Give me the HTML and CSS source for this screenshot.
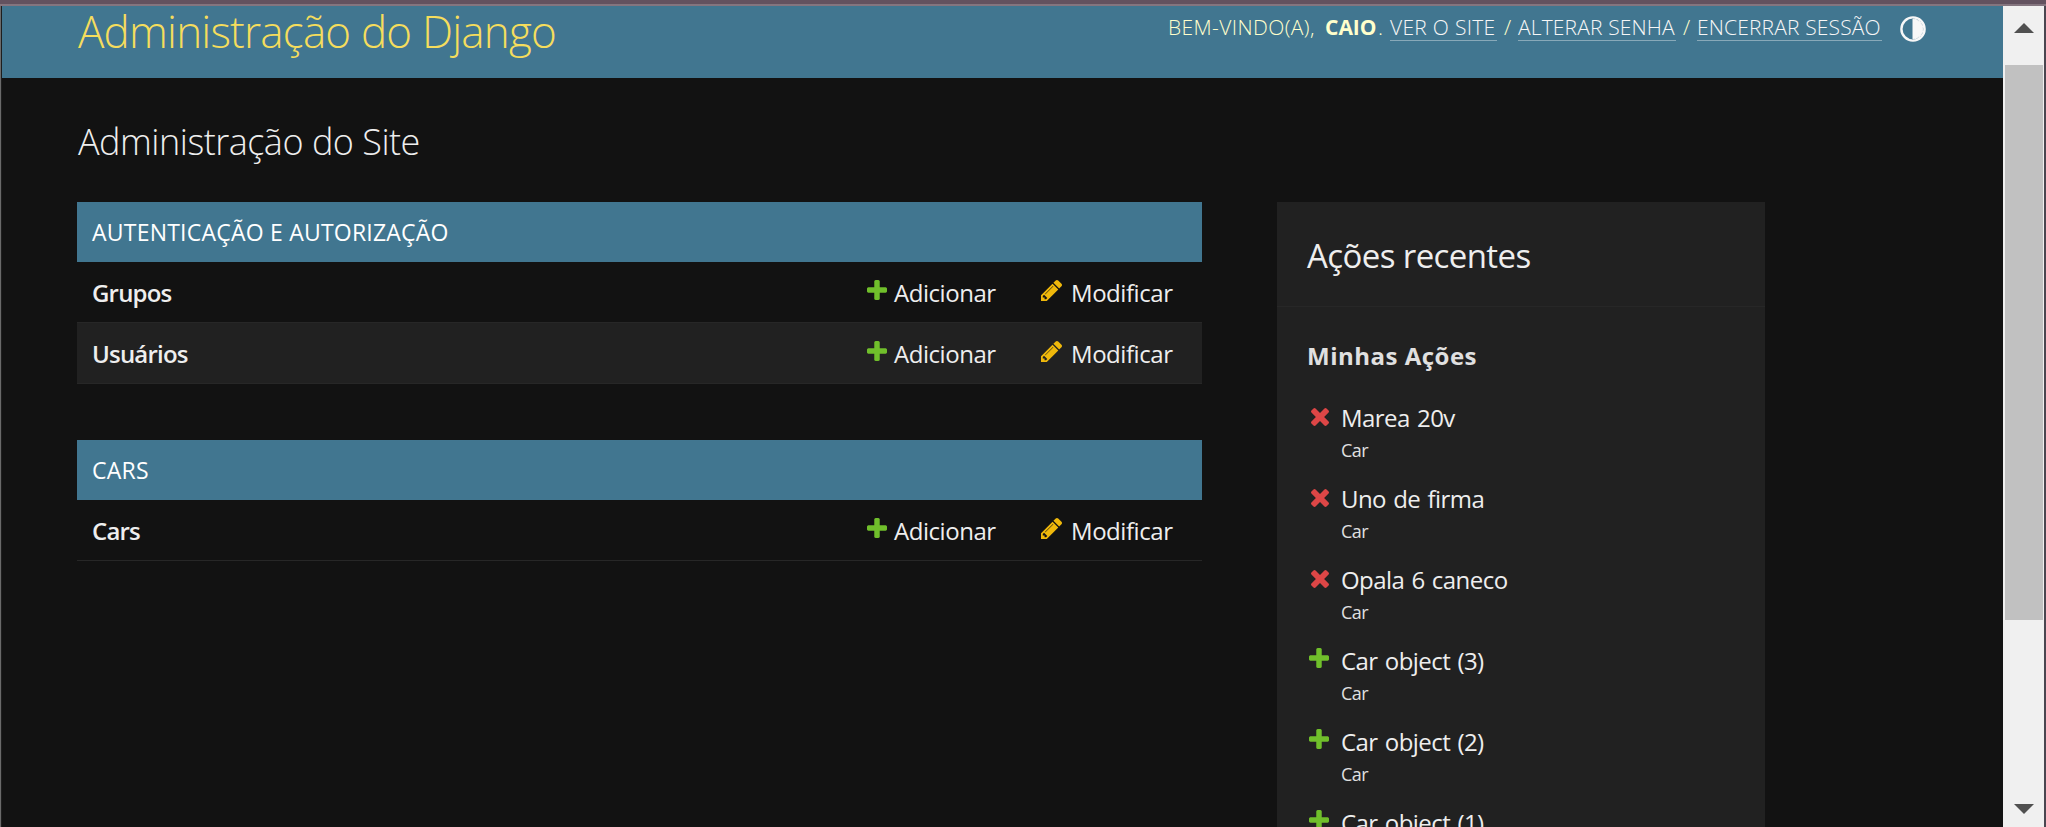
FILE: index.html
```html
<!DOCTYPE html>
<html lang="pt-br">
<head>
<meta charset="utf-8">
<title>Administração do Site</title>
<link rel="stylesheet" href="styles.css">
</head>
<body>
<svg class="defs" aria-hidden="true">
  <symbol id="add" viewBox="192 188 1408 1408"><path fill="#70bf2b" d="M1600 796v192q0 40-28 68t-68 28h-416v416q0 40-28 68t-68 28h-192q-40 0-68-28t-28-68v-416h-416q-40 0-68-28t-28-68v-192q0-40 28-68t68-28h416v-416q0-40 28-68t68-28h192q40 0 68 28t28 68v416h416q40 0 68 28t28 68z"/></symbol>
  <symbol id="edit" viewBox="128 149 1515 1515"><path fill="#efb80b" d="M491 1536l91-91-235-235-91 91v107h128v128h107zm523-928q0-22-22-22-10 0-17 7l-542 542q-7 7-7 17 0 22 22 22 10 0 17-7l542-542q7-7 7-17zm-54-192l416 416-832 832h-416v-416zm683 96q0 53-37 90l-166 166-416-416 166-165q36-38 90-38 53 0 91 38l235 234q37 39 37 91z"/></symbol>
  <symbol id="del" viewBox="302 366 1188 1188"><path fill="#dd4646" d="M1490 1322q0 40-28 68l-136 136q-28 28-68 28t-68-28l-294-294-294 294q-28 28-68 28t-68-28l-136-136q-28-28-28-68t28-68l294-294-294-294q-28-28-28-68t28-68l136-136q28-28 68-28t68 28l294 294 294-294q28-28 68-28t68 28l136 136q28 28 28 68t-28 68l-294 294 294 294q28 28 28 68z"/></symbol>
</svg>
<div class="frame-top"></div>
<div class="window">
  <div class="page">
    <header class="header">
      <div class="branding">Administração do Django</div>
      <div class="user-tools">
        <span class="welcome">BEM-VINDO(A),</span>
        <strong class="user">CAIO</strong><span class="dot">.</span>
        <a class="t1">VER O SITE</a><span class="slash">/</span><a class="t2">ALTERAR SENHA</a><span class="slash">/</span><a class="t3">ENCERRAR SESSÃO</a>
        <svg class="theme" viewBox="0 0 26 26"><circle cx="13" cy="13" r="11.6" fill="none" stroke="#f7f7f7" stroke-width="2.4"/><path d="M13 3a10 10 0 0 1 0 20z" fill="#f7f7f7" stroke="#f7f7f7"/></svg>
      </div>
    </header>
    <main class="content">
      <h1>Administração do Site</h1>
      <div class="columns">
        <div class="apps">
          <section class="module">
            <h2>AUTENTICAÇÃO E AUTORIZAÇÃO</h2>
            <div class="row"><b>Grupos</b><a class="add"><svg><use href="#add"/></svg>Adicionar</a><a class="edit"><svg><use href="#edit"/></svg>Modificar</a></div>
            <div class="row alt"><b>Usuários</b><a class="add"><svg><use href="#add"/></svg>Adicionar</a><a class="edit"><svg><use href="#edit"/></svg>Modificar</a></div>
          </section>
          <section class="module">
            <h2>CARS</h2>
            <div class="row"><b>Cars</b><a class="add"><svg><use href="#add"/></svg>Adicionar</a><a class="edit"><svg><use href="#edit"/></svg>Modificar</a></div>
          </section>
        </div>
        <aside class="recent">
          <h2>Ações recentes</h2>
          <h3>Minhas Ações</h3>
          <ul>
            <li class="del"><svg><use href="#del"/></svg><a>Marea 20v</a><small>Car</small></li>
            <li class="del"><svg><use href="#del"/></svg><a>Uno de firma</a><small>Car</small></li>
            <li class="del"><svg><use href="#del"/></svg><a>Opala 6 caneco</a><small>Car</small></li>
            <li><svg><use href="#add"/></svg><a>Car object (3)</a><small>Car</small></li>
            <li><svg><use href="#add"/></svg><a>Car object (2)</a><small>Car</small></li>
            <li><svg><use href="#add"/></svg><a>Car object (1)</a></li>
          </ul>
        </aside>
      </div>
    </main>
  </div>
  <div class="scrollbar">
    <svg class="arrow" viewBox="0 0 20 10"><path d="M10 0L20 10H0z" fill="#505050"/></svg>
    <div class="thumb"></div>
    <svg class="arrow down" viewBox="0 0 20 10"><path d="M0 0H20L10 10z" fill="#505050"/></svg>
  </div>
</div>
</body>
</html>
```
FILE: styles.css
```css
* { box-sizing: border-box; margin: 0; padding: 0; }
body {
  height: 827px;
  overflow: hidden;
  background: #121212;
  color: #eee;
  font-family: "Open Sans", "Noto Sans", sans-serif;
  font-size: 24px;
  white-space: nowrap;
}
.defs { display: none; }
.frame-top { height: 6px; background: #63525f; border-bottom: 2px solid #84757f; }
.window {
  display: flex;
  height: 821px;
  padding-left: 1px;
  background: #1e1e1e;
  border-left: 1px solid #6a6a6a;
  border-right: 2px solid #4a4650;
}
.page { flex: 1; overflow: hidden; background: #121212; }
.header {
  display: flex;
  justify-content: space-between;
  height: 72px;
  padding: 0 77px 0 76px;
  background: #417690;
}
.branding { font-size: 44px; line-height: 50px; font-weight: 300; color: #f5dd5d; letter-spacing: -.82px; }
.user-tools {
  display: flex;
  height: 42px;
  align-items: center;
  color: #ffc;
  font-size: 21px;
  font-weight: 300;
  line-height: 25px;
}
.user-tools a { color: #f7f7f7; height: 27px; line-height: 27px; border-bottom: 1px solid #88a9b9; }
.welcome { width: 157px; letter-spacing: .4px; }
.user { width: 53px; font-weight: 700; }
.dot { width: 12px; }
.slash { width: 21px; text-align: center; }
.t1 { width: 107px; letter-spacing: .3px; }
.t2 { width: 158px; letter-spacing: .15px; }
.t3 { width: 185px; letter-spacing: .15px; }
.theme { width: 26px; height: 26px; margin: 4px 0 0 18px; }
.content { padding: 39px 0 0 75px; }
h1 { font-size: 36px; font-weight: 300; line-height: 50px; margin-bottom: 35px; padding-left: 1px; letter-spacing: -.5px; }
.columns { display: flex; gap: 75px; }
.apps { width: 1125px; }
.module { margin-bottom: 56px; }
.module h2 { height: 60px; padding-left: 15px; background: #417690; color: #fff; font-size: 23px; font-weight: 400; line-height: 61px; letter-spacing: .22px; }
.row { display: flex; height: 61px; padding-left: 15px; border-bottom: 1px solid #272727; line-height: 61px; }
.row.alt { background: #212121; }
.row b { flex: 1; font-weight: 600; letter-spacing: -.8px; }
.add, .edit { display: flex; letter-spacing: -.45px; }
.add { width: 174px; }
.edit { width: 161px; }
.add svg { width: 20px; height: 20px; margin: 18px 7px 0 0; }
.edit svg { width: 21px; height: 21px; margin: 18px 9px 0 0; }
.recent { width: 488px; height: 900px; background: #212121; }
.recent h2 { height: 105px; padding: 3px 0 0 30px; border-bottom: 1px solid #272727; font-size: 33px; font-weight: 400; line-height: 102px; letter-spacing: -.6px; }
.recent h3 { height: 95px; padding: 2px 0 0 30px; color: #e0e0e0; font-size: 24px; font-weight: 700; line-height: 93px; letter-spacing: .5px; }
.recent ul { list-style: none; }
.recent li { display: grid; grid-template-columns: 32px 1fr; height: 81px; padding-left: 32px; grid-template-rows: 32px 32px; }
.recent li svg { width: 20px; height: 20px; margin-top: 3px; }
.recent li.del svg { width: 18px; height: 18px; margin: 6px 0 0 2px; }
.recent li a { line-height: 32px; letter-spacing: -.55px; word-spacing: 1.5px; }
.recent small { grid-column: 2; font-size: 18px; line-height: 32px; color: #e0e0e0; font-weight: 400; letter-spacing: -.5px; }
.scrollbar { display: flex; flex-direction: column; align-items: center; width: 41px; padding: 17px 0 13px; background: #f0f0f0; }
.arrow { width: 20px; height: 10px; }
.thumb { width: 38px; height: 555px; margin-top: 32px; background: #c1c1c1; }
.down { margin-top: auto; }
```
